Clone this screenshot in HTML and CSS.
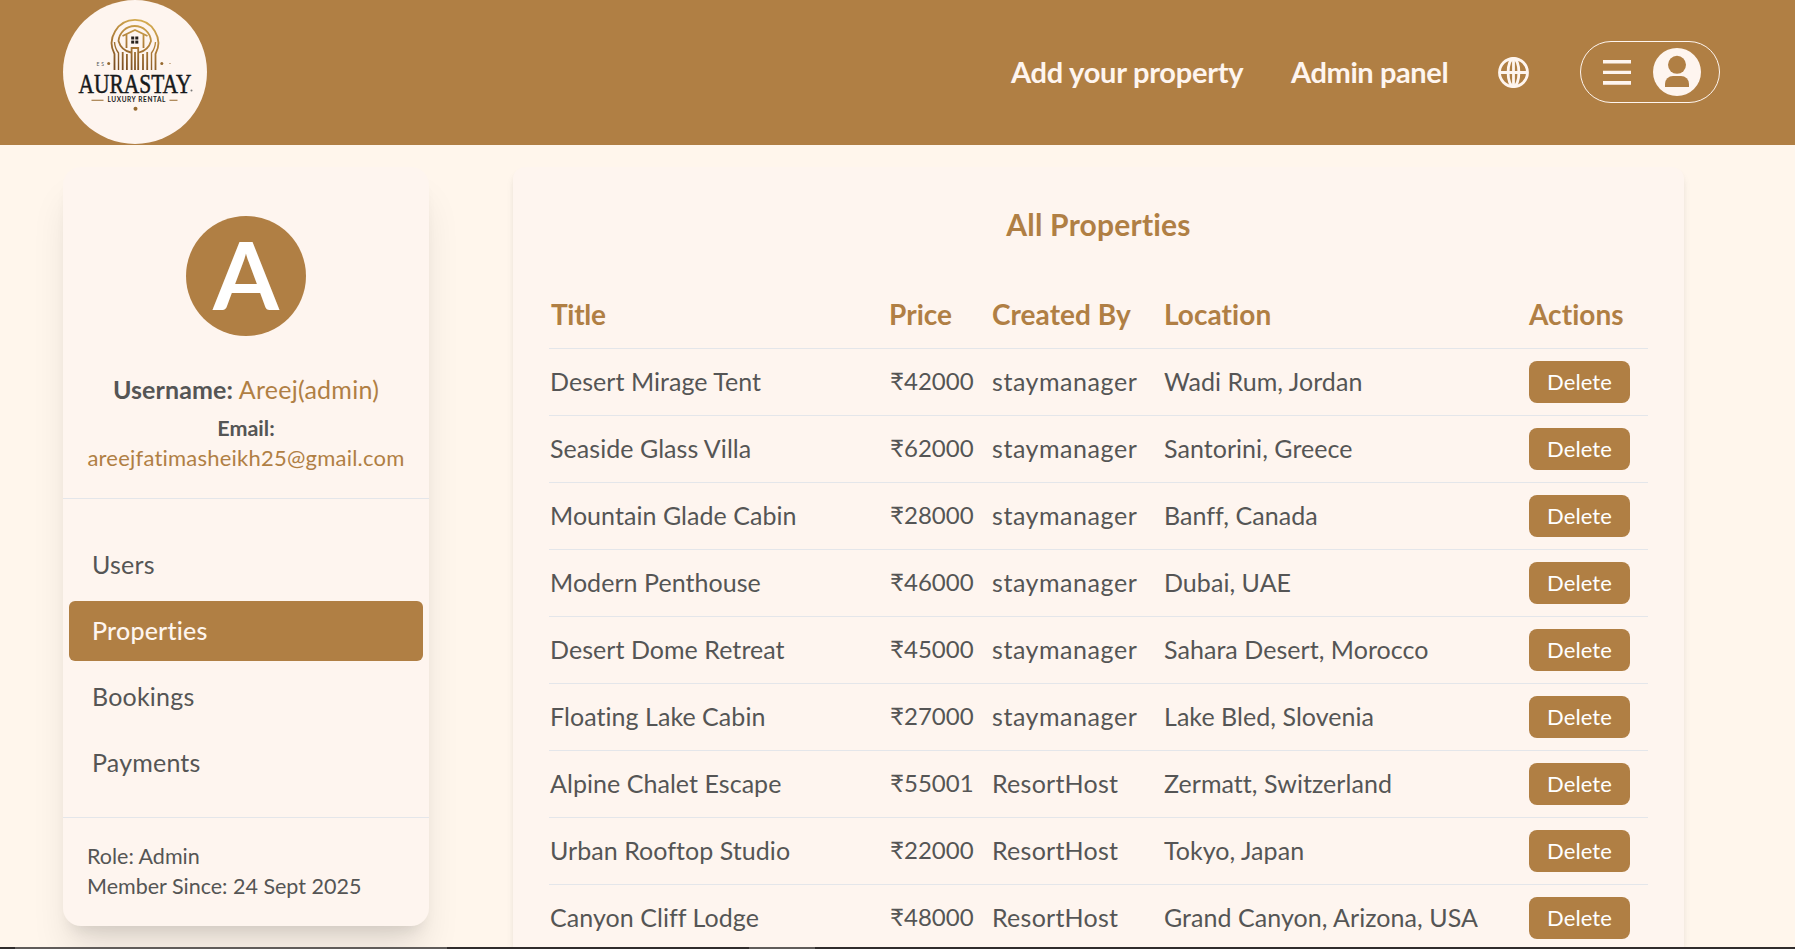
FILE: index.html
```html
<!DOCTYPE html>
<html lang="en">
<head>
<meta charset="utf-8">
<title>Aurastay Admin</title>
<link rel="stylesheet" href="styles.css">
</head>
<body>
<header class="header">
  <svg class="logo" viewBox="0 0 144 144" width="144" height="144">
    <defs>
      <linearGradient id="gold" gradientUnits="userSpaceOnUse" x1="80" y1="18" x2="62" y2="70">
        <stop offset="0" stop-color="#d8b052"/><stop offset=".5" stop-color="#ad7c38"/><stop offset="1" stop-color="#7a4d22"/>
      </linearGradient>
    </defs>
    <circle cx="72" cy="72" r="72" fill="#fef5ef"/>
    <g fill="none" stroke="url(#gold)" stroke-width="1.800">
      <path d="M51.500 70V54A23.200 23.200 0 1 1 92.500 54V70"/>
      <path d="M55.500 70V53A20 20 0 0 1 51.500 42" stroke-width="1.400"/>
      <path d="M88.500 70V53A20 20 0 0 0 92.500 42" stroke-width="1.400"/>
      <path d="M68 52.500A17 16 0 0 1 55.500 41A16.300 16.300 0 0 1 88 41A17 16 0 0 1 76 52.500"/>
      <path d="M59.500 36L72 30L84.500 36M63.500 34.500V48M80.500 34.500V48"/>
      <path d="M59.700 70V52M63.900 70V54M68.600 70V48H75.200V70M72 70V52M80 70V54M84.200 70V52"/>
    </g>
    <g fill="#25201c"><rect x="68.200" y="36.500" width="3" height="3"/><rect x="72.300" y="36.500" width="3" height="3"/><rect x="68.200" y="40.600" width="3" height="3"/><rect x="72.300" y="40.600" width="3" height="3"/></g>
    <g fill="#96692f"><circle cx="45.700" cy="63.500" r="1.500"/><circle cx="98.800" cy="63.500" r="1.500"/><circle cx="107" cy="63.500" r=".6"/><circle cx="72.500" cy="108.700" r="2"/>
    <path d="M28.500 99.700h12v1h-12zM106.500 99.700h8v1h-8z"/></g>
    <text class="logo-est" x="33.500" y="65.500" textLength="7.500">ES</text>
    <text class="logo-name" x="15.500" y="92.500" textLength="113" lengthAdjust="spacingAndGlyphs">AURASTAY</text>
    <circle cx="128.500" cy="90.500" r="1" fill="#777"/>
    <text class="logo-sub" x="44.500" y="101.500" textLength="58">LUXURY RENTAL</text>
  </svg>
  <nav class="nav">
    <a class="nav-link nav-add">Add your property</a>
    <a class="nav-link nav-admin">Admin panel</a>
    <svg class="globe" viewBox="0 0 31 31" width="31" height="31" fill="none" stroke="#fef5ef" stroke-width="2.800">
      <circle cx="15.500" cy="15.500" r="14"/><ellipse cx="15.500" cy="15.500" rx="5.400" ry="14"/><path d="M1.500 15.500h28M15.500 1.500v28"/>
    </svg>
    <div class="menu">
      <svg viewBox="0 0 28 25" width="28" height="25" fill="#fef5ef"><path d="M0 0h28v3.500H0zM0 10.800h28v3.200H0zM0 21h28v3.700H0z"/></svg>
      <svg viewBox="0 0 48 48" width="48" height="48"><circle cx="24" cy="24" r="24" fill="#fef5ef"/><circle cx="24" cy="16.800" r="9" fill="#b07f44"/><path d="M12 39v-3a8 8 0 0 1 8-8h8a8 8 0 0 1 8 8v3z" fill="#b07f44"/></svg>
    </div>
  </nav>
</header>
<main class="page">
  <aside class="side">
    <div class="profile">
      <div class="avatar"><svg viewBox="0 0 120 120" width="120" height="120"><text class="avatar-letter" x="60" y="94" text-anchor="middle" textLength="66" lengthAdjust="spacingAndGlyphs">A</text></svg></div>
      <p class="username"><b>Username:</b> <span>Areej(admin)</span></p>
      <p class="email"><b>Email:</b><br><span>areejfatimasheikh25@gmail.com</span></p>
    </div>
    <ul class="tabs">
      <li class="tab">Users</li>
      <li class="tab tab-active">Properties</li>
      <li class="tab">Bookings</li>
      <li class="tab">Payments</li>
    </ul>
    <div class="meta">Role: Admin<br>Member Since: 24 Sept 2025</div>
  </aside>
  <section class="panel">
    <h1 class="panel-title">All Properties</h1>
    <table class="table">
      <colgroup><col class="c-title"><col class="c-price"><col class="c-by"><col class="c-loc"><col class="c-act"></colgroup>
      <thead><tr><th class="th-title">Title</th><th>Price</th><th>Created By</th><th>Location</th><th>Actions</th></tr></thead>
      <tbody>
        <tr><td>Desert Mirage Tent</td><td class="price">₹42000</td><td class="by">staymanager</td><td>Wadi Rum, Jordan</td><td><button class="delete">Delete</button></td></tr>
        <tr><td>Seaside Glass Villa</td><td class="price">₹62000</td><td class="by">staymanager</td><td>Santorini, Greece</td><td><button class="delete">Delete</button></td></tr>
        <tr><td>Mountain Glade Cabin</td><td class="price">₹28000</td><td class="by">staymanager</td><td>Banff, Canada</td><td><button class="delete">Delete</button></td></tr>
        <tr><td>Modern Penthouse</td><td class="price">₹46000</td><td class="by">staymanager</td><td>Dubai, UAE</td><td><button class="delete">Delete</button></td></tr>
        <tr><td>Desert Dome Retreat</td><td class="price">₹45000</td><td class="by">staymanager</td><td>Sahara Desert, Morocco</td><td><button class="delete">Delete</button></td></tr>
        <tr><td>Floating Lake Cabin</td><td class="price">₹27000</td><td class="by">staymanager</td><td>Lake Bled, Slovenia</td><td><button class="delete">Delete</button></td></tr>
        <tr><td>Alpine Chalet Escape</td><td class="price">₹55001</td><td class="by by-host">ResortHost</td><td>Zermatt, Switzerland</td><td><button class="delete">Delete</button></td></tr>
        <tr><td>Urban Rooftop Studio</td><td class="price">₹22000</td><td class="by by-host">ResortHost</td><td>Tokyo, Japan</td><td><button class="delete">Delete</button></td></tr>
        <tr><td>Canyon Cliff Lodge</td><td class="price">₹48000</td><td class="by by-host">ResortHost</td><td>Grand Canyon, Arizona, USA</td><td><button class="delete">Delete</button></td></tr>
      </tbody>
    </table>
  </section>
</main>
<div class="edge"></div>
</body>
</html>
```
FILE: styles.css
```css
* { box-sizing: border-box; }
body {
  margin: 0;
  height: 949px;
  overflow: hidden;
  display: flex;
  flex-direction: column;
  background: #fff6ec;
  color: #555;
  font-family: Lato, "Noto Sans", sans-serif;
  font-size: 25px;
  font-variant-ligatures: none;
}
.header {
  flex: 0 0 145px;
  display: flex;
  justify-content: space-between;
  align-items: flex-start;
  padding: 0 75px 0 63px;
  background: #b07f44;
}
.logo { display: block; overflow: visible; }
.logo-name { font: 400 27px "Liberation Serif", serif; fill: #17191b; stroke: #17191b; stroke-width: .5px; }
.logo-sub { font: 700 6.500px Lato, sans-serif; fill: #222; }
.logo-est { font: 5px Lato, sans-serif; fill: #555; }
.nav { display: flex; align-items: center; height: 144px; color: #fef5ef; }
.nav-link { padding-bottom: 2px; font-size: 29px; font-weight: 700; white-space: nowrap; }
.nav-add { width: 280px; letter-spacing: -.25px; }
.nav-admin { width: 207px; letter-spacing: -.4px; }
.globe { margin-right: 51px; }
.menu {
  width: 140px;
  height: 62px;
  border: 1px solid #fef5ef;
  border-radius: 31px;
  display: flex;
  align-items: center;
  justify-content: space-between;
  padding: 0 18px 0 22px;
}
.page { flex: 1; min-height: 0; display: flex; align-items: flex-start; gap: 84px; padding: 22px 0 0 63px; }
.side {
  width: 366px;
  height: 759px;
  border-radius: 18px;
  background: #fef5ef;
  box-shadow: 0 30px 38px -6px rgba(0, 0, 0, .1), 0 12px 15px -8px rgba(0, 0, 0, .1);
}
.profile { height: 332px; padding-top: 49px; border-bottom: 1px solid #e4e6ea; text-align: center; }
.avatar { width: 120px; height: 120px; margin: 0 auto; border-radius: 50%; background: #b07f44; }
.avatar-letter { font: 700 93px Lato, sans-serif; fill: #fff; }
.username { margin: 35px 0 0; line-height: 36px; letter-spacing: .25px; }
.username b { letter-spacing: .1px; }
.username span, .email span { color: #b07f44; }
.email { margin: 6px 0 0; font-size: 21.500px; line-height: 30px; }
.email span { font-size: 22px; letter-spacing: .22px; }
.tabs { margin: 0; padding: 36px 6px 0; height: 319px; list-style: none; border-bottom: 1px solid #e4e6ea; }
.tab { height: 60px; margin-bottom: 6px; padding-left: 23px; border-radius: 6px; line-height: 58px; letter-spacing: .2px; }
.tab-active { background: #b07f44; color: #fef5ef; font-weight: 500; }
.meta { padding: 23px 24px; font-size: 21.500px; line-height: 30px; }
.panel {
  width: 1171px;
  height: 780px;
  padding: 36px 36px 0;
  border-radius: 12px 12px 0 0;
  background: #fef5ef;
  box-shadow: 0 6px 9px -1.500px rgba(0, 0, 0, .08), 0 3px 6px -2px rgba(0, 0, 0, .06);
}
.panel-title { margin: 0; font-size: 30px; line-height: 42px; font-weight: 700; text-align: center; letter-spacing: .2px; color: #b07f44; }
.table { margin-top: 36px; width: 1099px; table-layout: fixed; border-collapse: separate; border-spacing: 0; }
.c-title { width: 338px; }
.c-price { width: 103px; }
.c-by { width: 172px; }
.c-loc { width: 365px; }
.c-act { width: 121px; }
.table th { height: 68px; padding: 0 0 2px 2px; border-bottom: 1px solid #e4e6ea; text-align: left; font-size: 28px; letter-spacing: .05px; color: #b07f44; white-space: nowrap; }
.table .th-title { letter-spacing: -.3px; }
.table td { height: 67px; padding: 0 0 2px 2px; border-bottom: 1px solid #e4e6ea; line-height: 28px; letter-spacing: .05px; white-space: nowrap; }
.table td:first-child { padding-left: 1px; }
.table td:last-child { padding-bottom: 0; }
.table .price { padding-left: 3px; font-size: 24px; letter-spacing: .05px; }
.table .by { letter-spacing: .55px; }
.table .by-host { letter-spacing: .25px; }
.delete {
  display: block;
  width: 101px;
  height: 42px;
  padding: 0 0 1px;
  border: 0;
  border-radius: 8px;
  background: #b07f44;
  color: #fff;
  font: 22px/41px Lato, sans-serif;
  letter-spacing: .1px;
}
.edge {
  position: absolute;
  left: 0;
  right: 0;
  top: 947px;
  height: 2px;
  background: linear-gradient(90deg, #302c2c 15px, #605c5a 15px 447px, #302c2c 447px 749px, #605c5a 749px 815px, #302c2c 815px);
}
```
